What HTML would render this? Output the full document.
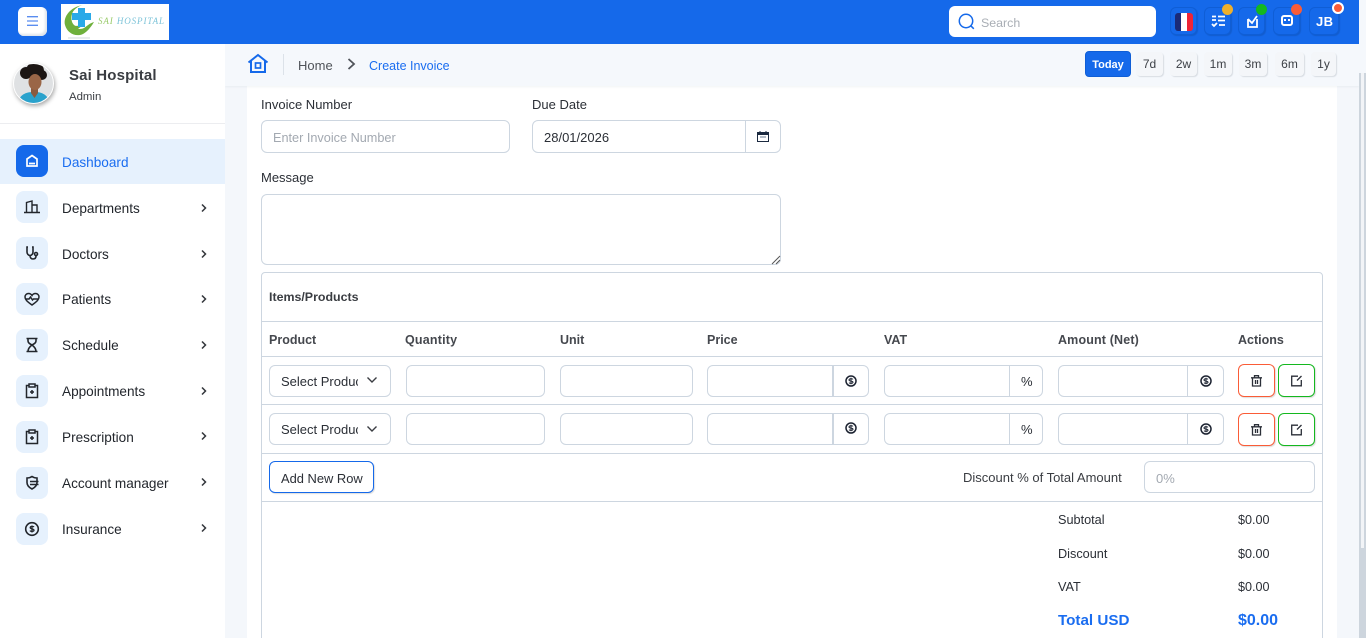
<!DOCTYPE html>
<html><head><meta charset="utf-8"><title>Create Invoice</title>
<style>
*{box-sizing:border-box}
html,body{margin:0;padding:0;width:1366px;height:638px;overflow:hidden;background:#f4f7fb;font-family:"Liberation Sans",sans-serif;font-size:13px;color:#2b2f36}
#w{position:absolute;left:0;top:0;width:1366px;height:638px;overflow:hidden}
.a{position:absolute}
.t{position:absolute;white-space:nowrap;line-height:18px}
.box{position:absolute;border:1px solid #cdd6e0;border-radius:6px;background:#fff}
.sep{position:absolute;top:0;bottom:0;width:1px;background:#cdd6e0}
.hl{position:absolute;left:262px;width:1060px;height:1px;background:#cdd6e0}
.ic{position:absolute;left:16px;width:32px;height:32px;border-radius:8px;background:#e6f1fd}
.ic svg{position:absolute;left:6px;top:6px}
.nav{position:absolute;left:62px;font-size:13.6px;line-height:18px;color:#22262c;white-space:nowrap;margin-top:1px}
.chev{position:absolute;left:200px}
.hb{position:absolute;top:7px;height:28px;width:27px;background:#1569ea;border:1px solid #0f5ed6;border-radius:6px;box-shadow:1px 1px 1px rgba(0,0,0,.12)}
.dot{position:absolute;width:11px;height:11px;border-radius:50%}
.rg{position:absolute;top:52px;height:24px;background:#f4f6f9;border-radius:4px;box-shadow:1px 1px 1px #d8dde3;text-align:center;line-height:25px;font-size:12px;color:#3c4046}
.th{position:absolute;top:332px;font-weight:bold;font-size:12.5px;line-height:17px;color:#45484e;white-space:nowrap}
svg{display:block;overflow:visible}
</style></head><body><div id="w">

<!-- page areas -->
<div class="a" style="left:225px;top:44px;width:1134px;height:594px;background:#f4f7fb"></div>
<div class="a" style="left:247px;top:86px;width:1090px;height:552px;background:#fff"></div>

<!-- breadcrumb bar -->
<div class="a" style="left:225px;top:44px;width:1134px;height:42px;background:#f5f8fc;box-shadow:0 1px 2px rgba(40,60,90,.06)"></div>
<svg class="a" style="left:247px;top:53px" width="22" height="22" viewBox="0 0 22 22" fill="none" stroke="#1569ea" stroke-width="2"><path d="M1.500 9.500 11 2l9.500 7.500M4 8v11h14V8"/><rect x="8.500" y="10" width="5" height="5" stroke-width="1.700"/></svg>
<div class="a" style="left:283px;top:54px;width:1px;height:21px;background:#dce2e9"></div>
<div class="t" style="left:298px;top:57px;font-size:13px;color:#4f5359">Home</div>
<svg class="a" style="left:347px;top:58px" width="9" height="12" viewBox="0 0 9 12" fill="none" stroke="#50545a" stroke-width="1.800"><path d="M1.500 1 7 6l-5.500 5"/></svg>
<div class="t" style="left:369px;top:57px;font-size:12.5px;color:#1a6df0">Create Invoice</div>

<div class="a" style="left:1085px;top:51px;width:46px;height:26px;background:#1569ea;border:1px solid #0f5ed6;border-radius:4px;color:#fff;font-weight:bold;font-size:11px;line-height:26px;text-align:center">Today</div>
<div class="rg" style="left:1136px;width:27px">7d</div>
<div class="rg" style="left:1170px;width:27px">2w</div>
<div class="rg" style="left:1204px;width:28px">1m</div>
<div class="rg" style="left:1239px;width:28px">3m</div>
<div class="rg" style="left:1275px;width:29px">6m</div>
<div class="rg" style="left:1311px;width:25px">1y</div>

<!-- scrollbar -->
<div class="a" style="left:1359px;top:0;width:7px;height:638px;background:#cdd5dd"></div>
<div class="a" style="left:1359px;top:0;width:7px;height:73px;background:#f5f8fc"></div>
<div class="a" style="left:1361px;top:73px;width:3px;height:475px;background:#f2f4f7"></div>

<!-- top bar -->
<div class="a" style="left:0;top:0;width:1359px;height:44px;background:#1569ea"></div>
<div class="a" style="left:18px;top:7px;width:29px;height:29px;background:#fff;border-radius:6px;box-shadow:inset -2px -2px 2px #dfe4ea"></div>
<svg class="a" style="left:27px;top:16px" width="11" height="10" fill="none" stroke="#5a8df0" stroke-width="1.300"><path d="M0 .7h11M0 5h11M0 9.300h11"/></svg>
<!-- logo -->
<div class="a" style="left:61px;top:4px;width:108px;height:36px;background:#fff"></div>
<svg class="a" style="left:61px;top:4px" width="108" height="36" viewBox="0 0 108 36">
<path d="M22 1C9 3 2 13 4 21c2 7 8 11 15 10 6-1 11-8 14-13-4 1-7 4-10 6-2 1-4 1-6 1l5-4c-3 0-7 2-9 0-3-3-3-8-2-11 1-4 6-8 11-9z" fill="#6fb03c"/>
<path d="M17 4h7v5h6v7h-6v7h-7v-7h-6V9h6z" fill="#2aa9e8"/>
<rect x="7" y="33" width="22" height="2" fill="#e8ecec"/>
<text x="37" y="20" font-family="Liberation Serif,serif" font-style="italic" font-size="9" fill="#9acb6b" letter-spacing=".9">SAI <tspan fill="#7cc3d8">HOSPITAL</tspan></text>
</svg>
<!-- search -->
<div class="a" style="left:949px;top:6px;width:207px;height:31px;background:#fff;border-radius:6px"></div>
<svg class="a" style="left:958px;top:13px" width="17" height="17" fill="none" stroke="#1569ea" stroke-width="1.500"><circle cx="8" cy="8" r="6.700"/><path d="M12.800 12.800l3 3"/></svg>
<div class="t" style="left:981px;top:14px;color:#a9aeb5;font-size:12.4px">Search</div>
<!-- header buttons -->
<div class="hb" style="left:1170px"></div>
<div class="a" style="left:1175px;top:13px;width:18px;height:18px;border-radius:3px;overflow:hidden;background:linear-gradient(90deg,#1a2a78 0 33%,#fff 33% 66%,#ee2436 66%)"></div>
<div class="hb" style="left:1204px"></div>
<svg class="a" style="left:1212px;top:15px" width="13" height="12" fill="none" stroke="#fff" stroke-width="1.800"><path d="M0 1.500h4M6 1.500h7M6 5.500h7M0 5h4M0 9l2 2 3-3M7 10h6"/></svg>
<div class="dot" style="left:1222px;top:4px;background:#efb02c"></div>
<div class="hb" style="left:1238px"></div>
<svg class="a" style="left:1246px;top:15px" width="13" height="13" fill="none" stroke="#fff" stroke-width="1.800"><path d="M2 4v8h9V4M2 4l4 4 5-7"/></svg>
<div class="dot" style="left:1256px;top:4px;background:#14b81f"></div>
<div class="hb" style="left:1273px"></div>
<div class="a" style="left:1281px;top:15px;width:12px;height:11px;border:2px solid #fff;border-radius:3px"></div>
<div class="a" style="left:1284px;top:19px;width:6px;height:2px;border-left:2px solid #fff;border-right:2px solid #fff"></div>
<div class="dot" style="left:1291px;top:4px;background:#fa5c37"></div>
<div class="hb" style="left:1309px;width:30px"></div>
<div class="t" style="left:1316px;top:13px;color:#fff;font-weight:bold;font-size:13px;letter-spacing:.4px">JB</div>
<div class="a" style="left:1332px;top:2px;width:12px;height:12px;border-radius:50%;background:#fa5c37;border:2px solid #fff"></div>

<!-- sidebar -->
<div class="a" style="left:0;top:44px;width:225px;height:594px;background:#fff"></div>
<div class="a" style="left:13px;top:63px;width:41px;height:41px;border-radius:50%;background:#dfe1e3;border:1px solid #fff;box-shadow:1px 2px 4px rgba(0,0,0,.35);overflow:hidden">
<svg width="39" height="39" viewBox="0 0 39 39"><circle cx="12" cy="9" r="6" fill="#1c1614"/><circle cx="21" cy="7" r="9" fill="#1c1614"/><circle cx="28" cy="11" r="5" fill="#1c1614"/><path d="M4 40c1-9 7-12 16-12s14 3 16 12z" fill="#2aa2cc"/><path d="M17 22h7v7l-3.500 5-3.500-5z" fill="#8a5a3f"/><ellipse cx="21" cy="18" rx="6.500" ry="8" fill="#9a6647"/></svg></div>
<div class="t" style="left:69px;top:66px;margin-top:1px;font-size:15px;font-weight:bold;color:#3a3d42;letter-spacing:.15px">Sai Hospital</div>
<div class="t" style="left:69px;top:88px;font-size:11.4px;color:#3a3d42">Admin</div>
<div class="a" style="left:0;top:123px;width:225px;height:1px;background:#ecedf0"></div>

<div class="a" style="left:0;top:139px;width:225px;height:45px;background:#e6f1fd"></div>
<div class="ic" style="top:145px;background:#1569ea"><svg width="20" height="20" viewBox="0 0 20 20" fill="none" stroke="#fff" stroke-width="1.700"><path d="M10 4.500l5 3.500v7H5V8zM7 12.500h6"/></svg></div>
<div class="nav" style="top:153px;color:#1a6df0">Dashboard</div>

<div class="ic" style="top:191px"><svg width="20" height="20" viewBox="0 0 20 20" fill="none" stroke="#22262c" stroke-width="1.400"><path d="M2 15.500h16M4.500 15.500V5.500L10 4v11.500M10 8h5v7.500"/></svg></div>
<div class="nav" style="top:199px">Departments</div>
<div class="ic" style="top:237px"><svg width="20" height="20" viewBox="0 0 20 20" fill="none" stroke="#22262c" stroke-width="1.600"><path d="M6 4H5v5c0 2 1.500 3.500 3 3.500S11 11 11 9V4h-1M8 12.500c0 2 1 3.500 3 3.500s3-1 3-3"/><circle cx="14" cy="11" r="1.500"/></svg></div>
<div class="nav" style="top:245px">Doctors</div>
<div class="ic" style="top:283px"><svg width="20" height="20" viewBox="0 0 20 20" fill="none" stroke="#22262c" stroke-width="1.500"><path d="M10 16C5 12.500 3 10.500 3 8c0-2 1.500-3.500 3.500-3.500 1.500 0 2.800.8 3.500 2 .7-1.200 2-2 3.500-2C15.500 4.500 17 6 17 8c0 2.500-2 4.500-7 8zM3.500 10H7l1.500-2 2 3 1-1h5"/></svg></div>
<div class="nav" style="top:290px">Patients</div>
<div class="ic" style="top:329px"><svg width="20" height="20" viewBox="0 0 20 20" fill="none" stroke="#22262c" stroke-width="1.600"><path d="M4.500 3.500h11M4.500 16.500h11M6 3.500v2.500c0 2 2 3 4 4 2-1 4-2 4-4V3.500M6 16.500c0-3 2-5 4-6.500 2 1.500 4 3.500 4 6.500"/></svg></div>
<div class="nav" style="top:336px">Schedule</div>
<div class="ic" style="top:375px"><svg width="20" height="20" viewBox="0 0 20 20" fill="none" stroke="#22262c" stroke-width="1.500"><path d="M7 4.500H4.500v12h11v-12H13M7 3h6v3H7zM10 9v4M8 11h4"/></svg></div>
<div class="nav" style="top:382px">Appointments</div>
<div class="ic" style="top:421px"><svg width="20" height="20" viewBox="0 0 20 20" fill="none" stroke="#22262c" stroke-width="1.500"><path d="M7 4.500H4.500v12h11v-12H13M7 3h6v3H7zM10 9v4M8 11h4"/></svg></div>
<div class="nav" style="top:428px">Prescription</div>
<div class="ic" style="top:467px"><svg width="20" height="20" viewBox="0 0 20 20" fill="none" stroke="#22262c" stroke-width="1.600"><path d="M10 3.500c1.500 1 3 1.500 5 1.500v4.500c0 3-2 5-5 6.500-3-1.500-5-3.500-5-6.500V5c2 0 3.500-.5 5-1.500zM8 8.500h8.500M8 11.500h8.500"/></svg></div>
<div class="nav" style="top:474px">Account manager</div>
<div class="ic" style="top:513px"><svg width="20" height="20" viewBox="0 0 20 20" fill="none" stroke="#22262c" stroke-width="1.600"><circle cx="10" cy="10" r="6.300"/><path stroke-width="1.300" d="M12 8c-.5-.8-3.800-1-3.800.6 0 1.700 3.800.8 3.800 2.700 0 1.500-3.500 1.300-4 .3M10 6.500v7"/></svg></div>
<div class="nav" style="top:520px">Insurance</div>

<svg class="chev" style="top:204px" width="7" height="8" fill="none" stroke="#33363b" stroke-width="1.500"><path d="M2 .5 5.500 4 2 7.500"/></svg>
<svg class="chev" style="top:250px" width="7" height="8" fill="none" stroke="#33363b" stroke-width="1.500"><path d="M2 .5 5.500 4 2 7.500"/></svg>
<svg class="chev" style="top:295px" width="7" height="8" fill="none" stroke="#33363b" stroke-width="1.500"><path d="M2 .5 5.500 4 2 7.500"/></svg>
<svg class="chev" style="top:341px" width="7" height="8" fill="none" stroke="#33363b" stroke-width="1.500"><path d="M2 .5 5.500 4 2 7.500"/></svg>
<svg class="chev" style="top:387px" width="7" height="8" fill="none" stroke="#33363b" stroke-width="1.500"><path d="M2 .5 5.500 4 2 7.500"/></svg>
<svg class="chev" style="top:432px" width="7" height="8" fill="none" stroke="#33363b" stroke-width="1.500"><path d="M2 .5 5.500 4 2 7.500"/></svg>
<svg class="chev" style="top:478px" width="7" height="8" fill="none" stroke="#33363b" stroke-width="1.500"><path d="M2 .5 5.500 4 2 7.500"/></svg>
<svg class="chev" style="top:524px" width="7" height="8" fill="none" stroke="#33363b" stroke-width="1.500"><path d="M2 .5 5.500 4 2 7.500"/></svg>

<!-- form -->
<div class="t" style="left:261px;top:96px">Invoice Number</div>
<div class="box" style="left:261px;top:120px;width:249px;height:33px"></div>
<div class="t" style="left:273px;top:129px;color:#a3a9b1;font-size:12.7px">Enter Invoice Number</div>
<div class="t" style="left:532px;top:96px">Due Date</div>
<div class="box" style="left:532px;top:120px;width:249px;height:33px"><div class="sep" style="left:212px"></div></div>
<div class="t" style="left:544px;top:129px">28/01/2026</div>
<svg class="a" style="left:757px;top:131px" width="12" height="11" fill="none"><rect x=".5" y="1.500" width="11" height="9" stroke="#1b2a40"/><rect x="0" y="1" width="12" height="3" fill="#1b2a40"/><path d="M3 0v2M9 0v2" stroke="#1b2a40"/><path d="M3 6h6" stroke="#9aa6b4" stroke-width="1.500"/></svg>
<div class="t" style="left:261px;top:169px">Message</div>
<div class="box" style="left:261px;top:194px;width:520px;height:71px"></div>
<svg class="a" style="left:772px;top:256px" width="8" height="8" stroke="#555" fill="none"><path d="M0 8 8 0M4 8l4-4"/></svg>

<!-- items table -->
<div class="a" style="left:261px;top:272px;width:1062px;height:380px;border:1px solid #cdd6e0;border-radius:4px"></div>
<div class="t" style="left:269px;top:288px;font-weight:bold;font-size:12.4px;color:#3a3d42">Items/Products</div>
<div class="hl" style="top:321px"></div>
<div class="hl" style="top:356px"></div>
<div class="hl" style="top:404px"></div>
<div class="hl" style="top:453px"></div>
<div class="hl" style="top:501px"></div>
<div class="th" style="left:269px">Product</div>
<div class="th" style="left:405px;letter-spacing:.2px">Quantity</div>
<div class="th" style="left:560px">Unit</div>
<div class="th" style="left:707px">Price</div>
<div class="th" style="left:884px">VAT</div>
<div class="th" style="left:1058px;letter-spacing:.15px">Amount (Net)</div>
<div class="th" style="left:1238px">Actions</div>

<!-- row 1 -->
<div class="box" style="left:269px;top:365px;width:122px;height:32px"></div>
<div class="t" style="left:281px;top:373px;width:77px;overflow:hidden">Select Product</div>
<svg class="a" style="left:367px;top:377px" width="10" height="6" fill="none" stroke="#3a3d42" stroke-width="1.400"><path d="M.5.500 5 5 9.500.5"/></svg>
<div class="box" style="left:406px;top:365px;width:139px;height:32px"></div>
<div class="box" style="left:560px;top:365px;width:133px;height:32px"></div>
<div class="box" style="left:707px;top:365px;width:162px;height:32px"><div class="sep" style="left:124px;width:2px"></div></div>
<svg class="a" style="left:845px;top:375px" width="12" height="12" fill="none" stroke="#1b2230"><circle cx="6" cy="6" r="5" stroke-width="1.500"/><path d="M8 4.300c-.5-.8-4-1-4 .7s4 .6 4 2.200c0 1.500-3.500 1.300-4 .5M6 2.800v6.400" stroke-width="1"/></svg>
<div class="box" style="left:884px;top:365px;width:159px;height:32px"><div class="sep" style="left:124px"></div></div>
<div class="t" style="left:1021px;top:373px">%</div>
<div class="box" style="left:1058px;top:365px;width:166px;height:32px"><div class="sep" style="left:128px"></div></div>
<svg class="a" style="left:1200px;top:375px" width="12" height="12" fill="none" stroke="#1b2230"><circle cx="6" cy="6" r="5" stroke-width="1.500"/><path d="M8 4.300c-.5-.8-4-1-4 .7s4 .6 4 2.200c0 1.500-3.500 1.300-4 .5M6 2.800v6.400" stroke-width="1"/></svg>
<div class="box" style="left:1238px;top:364px;width:37px;height:33px;border-color:#fa5c37;box-shadow:1px 1px 1px #ddd"></div>
<svg class="a" style="left:1251px;top:375px" width="12" height="12" fill="none" stroke="#2b2f38" stroke-width="1.300"><path d="M0 2.800h11M3.500 2.500V.7h4v1.800M1.500 3v8h8V3M4.500 5v4M6.500 5v4"/></svg>
<div class="box" style="left:1278px;top:364px;width:37px;height:33px;border-color:#14b81f;box-shadow:1px 1px 1px #ddd"></div>
<svg class="a" style="left:1291px;top:375px" width="12" height="12" fill="none" stroke="#2b2f38" stroke-width="1.300"><path d="M7 1.200H.7v9.600h9.600V5M10.500 1 6 5.500"/></svg>

<!-- row 2 -->
<div class="box" style="left:269px;top:413px;width:122px;height:32px"></div>
<div class="t" style="left:281px;top:421px;width:77px;overflow:hidden">Select Product</div>
<svg class="a" style="left:367px;top:426px" width="10" height="6" fill="none" stroke="#3a3d42" stroke-width="1.400"><path d="M.5.500 5 5 9.500.5"/></svg>
<div class="box" style="left:406px;top:413px;width:139px;height:32px"></div>
<div class="box" style="left:560px;top:413px;width:133px;height:32px"></div>
<div class="box" style="left:707px;top:413px;width:162px;height:32px"><div class="sep" style="left:124px;width:2px"></div></div>
<svg class="a" style="left:845px;top:422px" width="12" height="12" fill="none" stroke="#1b2230"><circle cx="6" cy="6" r="5" stroke-width="1.500"/><path d="M8 4.300c-.5-.8-4-1-4 .7s4 .6 4 2.200c0 1.500-3.500 1.300-4 .5M6 2.800v6.400" stroke-width="1"/></svg>
<div class="box" style="left:884px;top:413px;width:159px;height:32px"><div class="sep" style="left:124px"></div></div>
<div class="t" style="left:1021px;top:421px">%</div>
<div class="box" style="left:1058px;top:413px;width:166px;height:32px"><div class="sep" style="left:128px"></div></div>
<svg class="a" style="left:1200px;top:423px" width="12" height="12" fill="none" stroke="#1b2230"><circle cx="6" cy="6" r="5" stroke-width="1.500"/><path d="M8 4.300c-.5-.8-4-1-4 .7s4 .6 4 2.200c0 1.500-3.500 1.300-4 .5M6 2.800v6.400" stroke-width="1"/></svg>
<div class="box" style="left:1238px;top:413px;width:37px;height:33px;border-color:#fa5c37;box-shadow:1px 1px 1px #ddd"></div>
<svg class="a" style="left:1251px;top:424px" width="12" height="12" fill="none" stroke="#2b2f38" stroke-width="1.300"><path d="M0 2.800h11M3.500 2.500V.7h4v1.800M1.500 3v8h8V3M4.500 5v4M6.500 5v4"/></svg>
<div class="box" style="left:1278px;top:413px;width:37px;height:33px;border-color:#14b81f;box-shadow:1px 1px 1px #ddd"></div>
<svg class="a" style="left:1291px;top:424px" width="12" height="12" fill="none" stroke="#2b2f38" stroke-width="1.300"><path d="M7 1.200H.7v9.600h9.600V5M10.500 1 6 5.500"/></svg>

<!-- add row -->
<div class="box" style="left:269px;top:461px;width:105px;height:32px;border-color:#1569ea;box-shadow:1px 1px 1px #ddd"></div>
<div class="t" style="left:281px;top:470px;font-size:12.9px">Add New Row</div>
<div class="t" style="left:963px;top:469px;color:#3a3d42">Discount % of Total Amount</div>
<div class="box" style="left:1144px;top:461px;width:171px;height:32px"></div>
<div class="t" style="left:1156px;top:470px;color:#a3a9b1">0%</div>

<!-- totals -->
<div class="t" style="left:1058px;top:511px;font-size:12.7px">Subtotal</div><div class="t" style="left:1238px;top:511px;font-size:12.6px">$0.00</div>
<div class="t" style="left:1058px;top:545px;font-size:12.7px">Discount</div><div class="t" style="left:1238px;top:545px;font-size:12.6px">$0.00</div>
<div class="t" style="left:1058px;top:578px;font-size:12.7px">VAT</div><div class="t" style="left:1238px;top:578px;font-size:12.6px">$0.00</div>
<div class="t" style="left:1058px;top:612px;font-weight:bold;font-size:15.2px;color:#1a6df0">Total USD</div>
<div class="t" style="left:1238px;top:612px;font-weight:bold;font-size:16px;color:#1a6df0">$0.00</div>

</div></body></html>
